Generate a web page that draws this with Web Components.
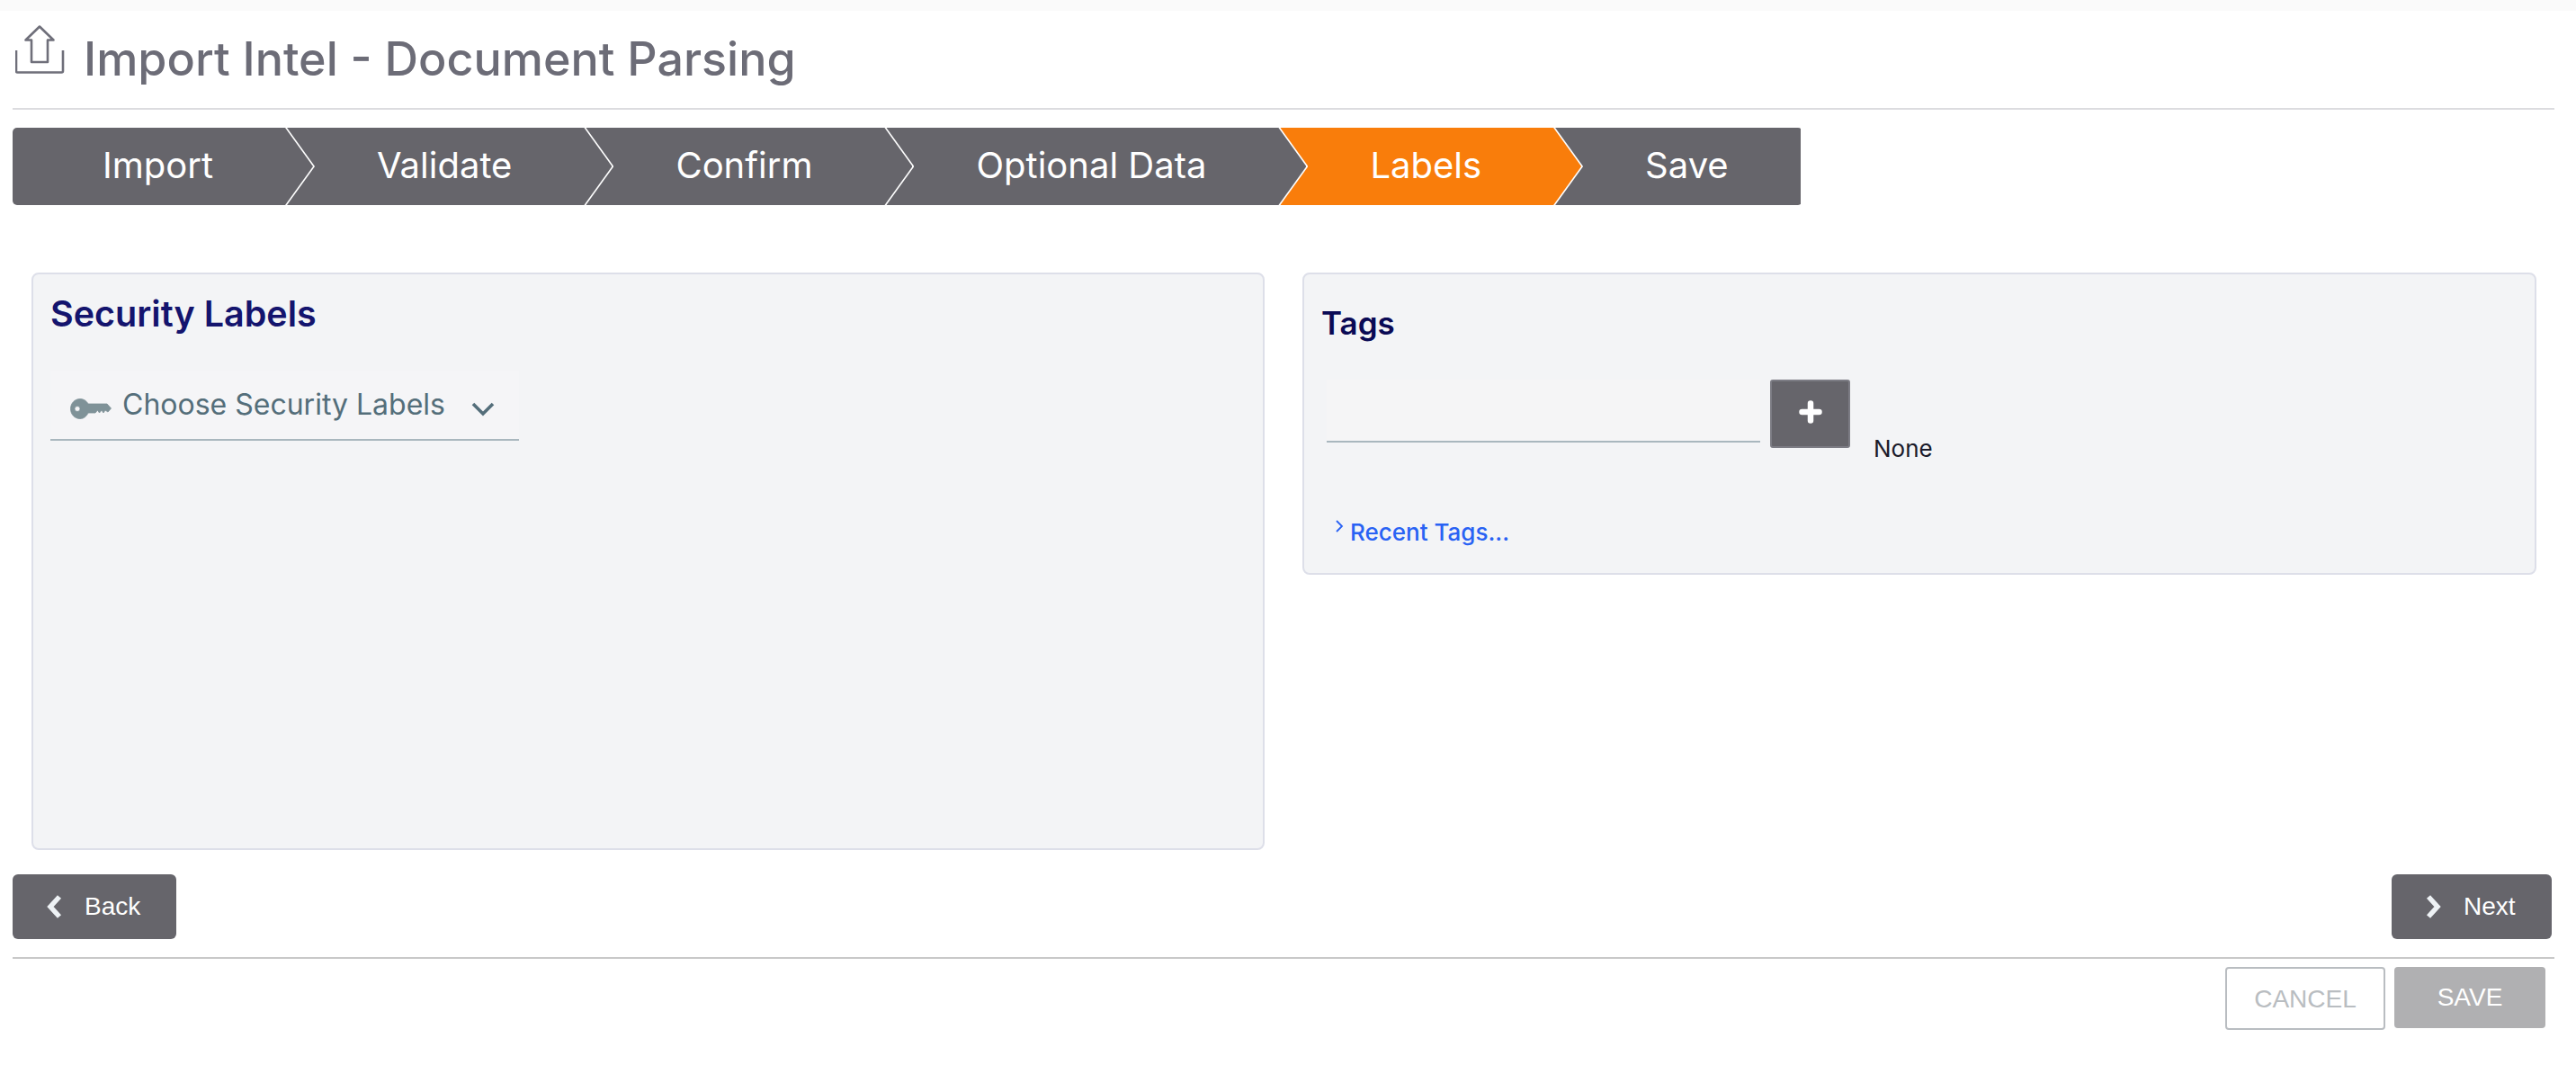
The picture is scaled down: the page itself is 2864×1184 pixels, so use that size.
<!DOCTYPE html>
<html lang="en">
<head>
<meta charset="utf-8">
<title>Import Intel - Document Parsing</title>
<style>
html, body { margin: 0; background: #fff; }
body { font-family: "Inter", "Liberation Sans", sans-serif; width: 2864px; height: 1184px; overflow: hidden; }
</style>
</head>
<body>
<import-page></import-page>
<script>
class PageHeader extends HTMLElement {
  constructor() {
    super();
    this.attachShadow({ mode: "open" }).innerHTML = `
<style>
:host { display: flex; align-items: flex-start; height: 108px; border-bottom: 2px solid #dcdcdf; box-sizing: content-box; }
svg { display: block; width: 56px; height: 56px; margin: 15px 0 0 3px; flex: none; }
h1 { margin: 24px 0 0 20px; font: 500 52px/60px "Inter", sans-serif; color: #6c6c77; white-space: nowrap; }
</style>
<svg viewBox="0 0 56 56" fill="none" stroke="#6f6f7a" stroke-width="2.6">
  <path d="M1 29 V52 Q1 53.500 2.500 53.500 H51.500 Q53 53.500 53 52 V29"/>
  <path d="M27 2.500 L11.500 17.500 H18 V42 H36 V17.500 H42.500 Z" stroke-linejoin="round"/>
</svg>
<h1><slot></slot></h1>`;
  }
}

class StepBar extends HTMLElement {
  constructor() {
    super();
    this.attachShadow({ mode: "open" }).innerHTML = `
<style>
:host { display: flex; width: max-content; height: 86px; margin-top: 20px; border-radius: 5px; overflow: hidden; }
</style>
<slot></slot>`;
  }
}

class StepItem extends HTMLElement {
  constructor() {
    super();
    this.attachShadow({ mode: "open" }).innerHTML = `
<style>
:host {
  --fill: #66656b;
  --shape: polygon(0 0, calc(100% - 31px) 0, 100% 50%, calc(100% - 31px) 100%, 0 100%);
  display: flex;
  align-items: center;
  position: relative;
  padding: 0 113px 0 100px;
  margin-right: -31px;
  font: 400 40px/48px "Inter", sans-serif;
  color: #fff;
  white-space: nowrap;
}
:host([active]) { --fill: #f97d0b; }
:host([last]) { --shape: none; padding-right: 82px; margin-right: 0; }
:host::before, :host::after { content: ""; position: absolute; top: 0; bottom: 0; left: 0; clip-path: var(--shape); }
:host::before { right: 0; background: #fff; }
:host::after { right: 2px; background: var(--fill); }
span { position: relative; z-index: 1; margin-top: -3px; }
</style>
<span><slot></slot></span>`;
  }
}

class LabelPanel extends HTMLElement {
  constructor() {
    super();
    this.attachShadow({ mode: "open" }).innerHTML = `
<style>
:host {
  display: block;
  box-sizing: border-box;
  background: #f3f4f6;
  border: 2px solid #dddfe9;
  border-radius: 8px;
}
</style>
<slot></slot>`;
  }
}

class KeySelect extends HTMLElement {
  constructor() {
    super();
    this.attachShadow({ mode: "open" }).innerHTML = `
<style>
:host {
  display: flex;
  align-items: flex-start;
  box-sizing: border-box;
  width: 521px;
  height: 78px;
  margin: 40px 0 0 19px;
  background: #f5f5f7;
  border-bottom: 2px solid #a9b7be;
  color: #546e7a;
  font: 400 32px/40px "Inter", sans-serif;
  white-space: nowrap;
}
.key { width: 46px; height: 23px; margin: 31px 0 0 22px; flex: none; filter: blur(0.4px); }
.label { margin: 18px 0 0 12px; }
.chev { width: 26px; height: 17px; margin: 34px 0 0 29px; flex: none; }
</style>
<svg class="key" viewBox="0 0 46 23" fill="#7f9298" stroke="#7f9298" stroke-width="0.800">
  <path fill-rule="evenodd" d="M11 0.500 C15.500 0.500 18.500 3 20 6 H41 L45.500 11 L42 15 L39 13 L37 16 L35 13 L32.500 16 L30.500 13 L28 16 H20 C18.500 19.500 15.500 22.500 11 22.500 C4.500 22.500 0.500 17 0.500 11.500 C0.500 6 4.500 0.500 11 0.500 Z M8 8.500 A3 3 0 1 0 8 14.500 A3 3 0 1 0 8 8.500 Z"/>
</svg>
<span class="label"><slot></slot></span>
<svg class="chev" viewBox="0 0 26 17" fill="none" stroke="#546e7a" stroke-width="3.600">
  <path d="M2 3 L13 14 L24 3"/>
</svg>`;
  }
}

class TagEntry extends HTMLElement {
  constructor() {
    super();
    this.attachShadow({ mode: "open" }).innerHTML = `
<style>
:host { display: flex; align-items: flex-start; margin: 42px 0 0 25px; }
.field { box-sizing: border-box; width: 482px; height: 70px; background: #f5f5f6; border-bottom: 2px solid #a9b7be; flex: none; }
.add {
  box-sizing: border-box;
  display: flex;
  align-items: center;
  justify-content: center;
  width: 89px;
  height: 76px;
  margin-left: 11px;
  background: #66656b;
  border: 2px solid #7c7c84;
  border-radius: 3px;
  flex: none;
}
.add svg { width: 26px; height: 26px; margin-top: -5px; }
.none { margin: 61px 0 0 26px; font: 400 26px/32px "Inter", sans-serif; color: #1a1a2a; }
</style>
<div class="field"></div>
<div class="add">
  <svg viewBox="0 0 26 26" fill="none" stroke="#fff" stroke-width="6.500" stroke-linecap="round"><path d="M13 3.500 V22.500 M3.500 13 H22.500"/></svg>
</div>
<div class="none"><slot></slot></div>`;
  }
}

class RecentLink extends HTMLElement {
  constructor() {
    super();
    this.attachShadow({ mode: "open" }).innerHTML = `
<style>
:host { display: flex; align-items: flex-start; margin: 61px 0 0 34px; font: 500 26px/32px "Inter", sans-serif; color: #2962f4; white-space: nowrap; }
svg { width: 10px; height: 14px; margin: 2px 7px 0 0; flex: none; }
</style>
<svg viewBox="0 0 10 14" fill="none" stroke="#2962f4" stroke-width="1.800"><path d="M2 1 L8 7 L2 13"/></svg>
<span><slot></slot></span>`;
  }
}

class NavButton extends HTMLElement {
  constructor() {
    super();
    const back = this.getAttribute("dir") === "back";
    this.attachShadow({ mode: "open" }).innerHTML = `
<style>
:host {
  box-sizing: border-box;
  display: flex;
  align-items: center;
  height: 72px;
  padding-left: 38px;
  background: #66656b;
  border-radius: 6px;
  color: #fff;
  font: 400 28px/32px "Liberation Sans", sans-serif;
  white-space: nowrap;
}
svg { width: 17px; height: 26px; margin-right: 25px; flex: none; }
</style>
<svg viewBox="0 0 17 26" fill="none" stroke="#eef2f5" stroke-width="5.500">
  <path d="${back ? "M14 2 L4 13 L14 24" : "M3 2 L13 13 L3 24"}"/>
</svg>
<span><slot></slot></span>`;
  }
}

class ActionButton extends HTMLElement {
  constructor() {
    super();
    this.attachShadow({ mode: "open" }).innerHTML = `
<style>
:host {
  box-sizing: border-box;
  display: flex;
  align-items: center;
  justify-content: center;
  font: 400 28px/32px "Liberation Sans", sans-serif;
  border-radius: 4px;
  white-space: nowrap;
}
:host([kind="outline"]) { width: 178px; height: 70px; padding-top: 2px; background: #fff; border: 2px solid #b9bdc1; color: #b9bdc1; }
:host([kind="solid"]) { width: 168px; height: 68px; margin-left: 10px; background: #b0b0b2; color: #fff; }
</style>
<slot></slot>`;
  }
}

class ImportPage extends HTMLElement {
  constructor() {
    super();
    this.attachShadow({ mode: "open" }).innerHTML = `
<style>
:host { display: block; font-family: "Inter", sans-serif; }
.strip { height: 12px; background: #fafafa; }
.wrap { width: 2826px; margin-left: 14px; }
.panels { display: grid; grid-template-columns: 1371px 1372px; column-gap: 42px; align-items: start; margin: 75px 0 0 21px; }
.security { height: 642px; }
.tags { height: 336px; }
h2 { margin: 0; font-weight: 600; white-space: nowrap; }
.security h2 { margin: 21px 0 0 19px; font-size: 39.500px; line-height: 46px; color: #14146e; }
.tags h2 { margin: 33px 0 0 19px; font-size: 35px; line-height: 42px; color: #0a0a55; }
.nav { display: flex; justify-content: space-between; margin: 27px 3px 0 0; border: 0; }
.back { width: 182px; }
.next { width: 178px; }
.rule { height: 2px; margin-top: 20px; background: #c8c8c8; }
.actions { display: flex; align-items: flex-start; justify-content: flex-end; margin: 9px 10px 0 0; }
</style>
<div class="strip"></div>
<div class="wrap">
  <page-header>Import Intel - Document Parsing</page-header>
  <step-bar>
    <step-item style="z-index:6">Import</step-item>
    <step-item style="z-index:5">Validate</step-item>
    <step-item style="z-index:4">Confirm</step-item>
    <step-item style="z-index:3">Optional Data</step-item>
    <step-item style="z-index:2" active>Labels</step-item>
    <step-item style="z-index:1" last>Save</step-item>
  </step-bar>
  <div class="panels">
    <label-panel class="security">
      <h2>Security Labels</h2>
      <key-select>Choose Security Labels</key-select>
    </label-panel>
    <label-panel class="tags">
      <h2>Tags</h2>
      <tag-entry>None</tag-entry>
      <recent-link>Recent Tags...</recent-link>
    </label-panel>
  </div>
  <div class="nav">
    <nav-button class="back" dir="back">Back</nav-button>
    <nav-button class="next" dir="next">Next</nav-button>
  </div>
  <div class="rule"></div>
  <div class="actions">
    <action-button kind="outline">CANCEL</action-button>
    <action-button kind="solid">SAVE</action-button>
  </div>
</div>`;
  }
}

customElements.define("page-header", PageHeader);
customElements.define("step-bar", StepBar);
customElements.define("step-item", StepItem);
customElements.define("label-panel", LabelPanel);
customElements.define("key-select", KeySelect);
customElements.define("tag-entry", TagEntry);
customElements.define("recent-link", RecentLink);
customElements.define("nav-button", NavButton);
customElements.define("action-button", ActionButton);
customElements.define("import-page", ImportPage);
</script>
</body>
</html>
